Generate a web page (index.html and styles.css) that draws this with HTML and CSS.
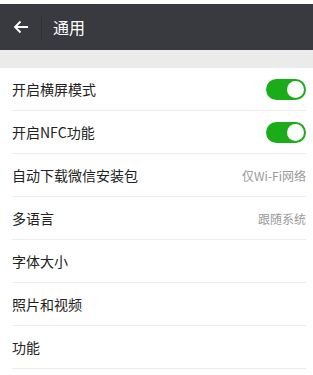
FILE: index.html
```html
<!DOCTYPE html>
<html lang="zh-CN">
<head>
    <meta charset="UTF-8">
    <meta name="viewport" content="width=device-width, initial-scale=1.0">
    <title>通用</title>
    <link rel="stylesheet" href="styles.css">
</head>
<body>
    <!-- Title Bar -->
    <div class="top-gap"></div>
    <div class="title-bar">
        <span class="back">
            <svg width="16" height="14" viewBox="0 0 16 14">
                <path d="M15 7H2M7.5 1.5L2 7l5.5 5.5" fill="none" stroke="#fff" stroke-width="1.8"/>
            </svg>
        </span>
        <span class="bar-divider"></span>
        <span class="title">通用</span>
    </div>
    <div class="section-gap"></div>

    <!-- Settings List -->
    <ul class="settings">
        <li class="row"><span class="label">开启横屏模式</span><span class="switch"></span></li>
        <li class="row"><span class="label">开启NFC功能</span><span class="switch"></span></li>
        <li class="row"><span class="label">自动下载微信安装包</span><span class="value">仅Wi-Fi网络</span></li>
        <li class="row"><span class="label">多语言</span><span class="value">跟随系统</span></li>
        <li class="row"><span class="label">字体大小</span></li>
        <li class="row"><span class="label">照片和视频</span></li>
        <li class="row"><span class="label">功能</span></li>
    </ul>
</body>
</html>
```

FILE: styles.css
```css
body {
    margin: 0;
    background: #fff;
    font-family: "Noto Sans CJK SC", "Noto Sans", sans-serif;
    color: #222;
}
.top-gap {
    height: 4px;
    background: #fff;
}
.title-bar {
    height: 46px;
    background: #393a3f;
    display: flex;
    align-items: center;
}
.back {
    width: 40px;
    display: flex;
    justify-content: center;
    padding-left: 1px;
}
.back svg {
    display: block;
}
.bar-divider {
    width: 1px;
    height: 24px;
    background: #2f3034;
}
.title {
    color: #fff;
    font-size: 16px;
    margin-left: 11px;
}
.section-gap {
    height: 18px;
    background: #ebebeb;
}
.settings {
    list-style: none;
    margin: 0;
    padding: 0 7px 0 12px;
}
.row {
    height: 42px;
    border-bottom: 1px solid #ececec;
    display: flex;
    align-items: center;
    justify-content: space-between;
}
.label {
    font-size: 14px;
    color: #222;
}
.value {
    font-size: 12px;
    color: #9a9a9a;
}
.switch {
    width: 40px;
    height: 21px;
    border-radius: 11px;
    background: #1aad19;
    position: relative;
}
.switch::after {
    content: "";
    position: absolute;
    right: 2px;
    top: 2px;
    width: 17px;
    height: 17px;
    border-radius: 50%;
    background: #fff;
}
```
